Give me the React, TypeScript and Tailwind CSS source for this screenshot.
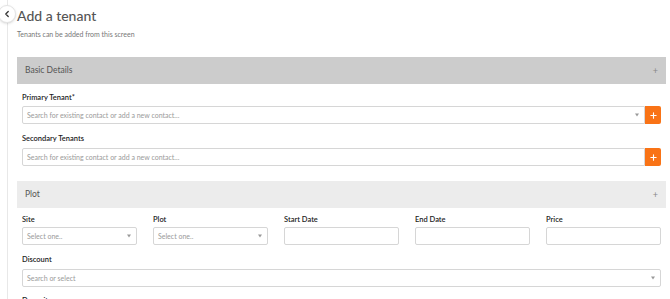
import { ChevronLeft, Plus } from "lucide-react"

const font = { fontFamily: "Lato, 'Noto Sans', sans-serif" }

function Caret() {
  return <span className="absolute right-[5px] top-1/2 -translate-y-1/2 border-x-[2.5px] border-t-[3px] border-x-transparent border-t-[#999]" />
}

function Box({ placeholder, caret, className = "" }: { placeholder?: string; caret?: boolean; className?: string }) {
  return (
    <div className={`relative h-[18px] rounded-[2px] border border-[#d6d6d6] bg-white px-[4px] text-[7px] leading-[16px] text-[#9a9a9a] ${className}`}>
      {placeholder}
      {caret && <Caret />}
    </div>
  )
}

function SearchWithAdd({ caret }: { caret?: boolean }) {
  return (
    <div className="flex h-[18px]">
      <Box placeholder="Search for existing contact or add a new contact..." caret={caret} className="flex-1 rounded-r-none" />
      <button className="flex w-[16px] items-center justify-center rounded-r-[2px] bg-[#f97316] text-white">
        <Plus size={9} strokeWidth={3} />
      </button>
    </div>
  )
}

function SectionHeader({ title, dark }: { title: string; dark?: boolean }) {
  return (
    <div className={`flex h-[27px] items-center justify-between px-[8px] text-[8.5px] text-[#555] ${dark ? "bg-[#cccccc]" : "bg-[#ececec]"}`}>
      <span>{title}</span>
      <span className="text-[9px] text-[#888]">+</span>
    </div>
  )
}

function Label({ children }: { children: React.ReactNode }) {
  return <div className="text-[7.5px] font-semibold leading-[11px] text-[#222]">{children}</div>
}

export default function App() {
  return (
    <div className="relative h-[299px] w-[670px] overflow-hidden bg-white" style={font}>
      <div className="absolute left-[7px] top-0 h-full w-px bg-[#e8e8e8]" />
      <button className="absolute left-[-2px] top-[5px] flex h-[18px] w-[18px] items-center justify-center rounded-full border border-[#e4e4e4] bg-white shadow-sm">
        <ChevronLeft size={10} strokeWidth={3} className="text-[#333]" />
      </button>

      <div className="pl-[17px] pr-[4px] pt-[6px]">
        <h1 className="text-[14px] font-medium leading-[20px] text-[#555]">Add a tenant</h1>
        <p className="mt-[3px] text-[7px] leading-[11px] text-[#777]">Tenants can be added from this screen</p>

        <div className="mt-[17px]">
          <SectionHeader title="Basic Details" dark />
          <div className="px-[5px]">
            <div className="mt-[8px]"><Label>Primary Tenant*</Label></div>
            <div className="mt-[3px]"><SearchWithAdd caret /></div>
            <div className="mt-[9px]"><Label>Secondary Tenants</Label></div>
            <div className="mt-[4px]"><SearchWithAdd /></div>
          </div>
        </div>

        <div className="mt-[15px]">
          <SectionHeader title="Plot" />
          <div className="px-[5px]">
            <div className="mt-[6px] grid grid-cols-5 gap-x-[16px]">
              <div><Label>Site</Label><Box placeholder="Select one.." caret className="mt-[2px]" /></div>
              <div><Label>Plot</Label><Box placeholder="Select one.." caret className="mt-[2px]" /></div>
              <div><Label>Start Date</Label><Box className="mt-[2px]" /></div>
              <div><Label>End Date</Label><Box className="mt-[2px]" /></div>
              <div><Label>Price</Label><Box className="mt-[2px]" /></div>
            </div>
            <div className="mt-[9px]"><Label>Discount</Label></div>
            <Box placeholder="Search or select" caret className="mt-[4px]" />
            <div className="mt-[8px]"><Label>Deposit</Label></div>
          </div>
        </div>
      </div>
    </div>
  )
}
